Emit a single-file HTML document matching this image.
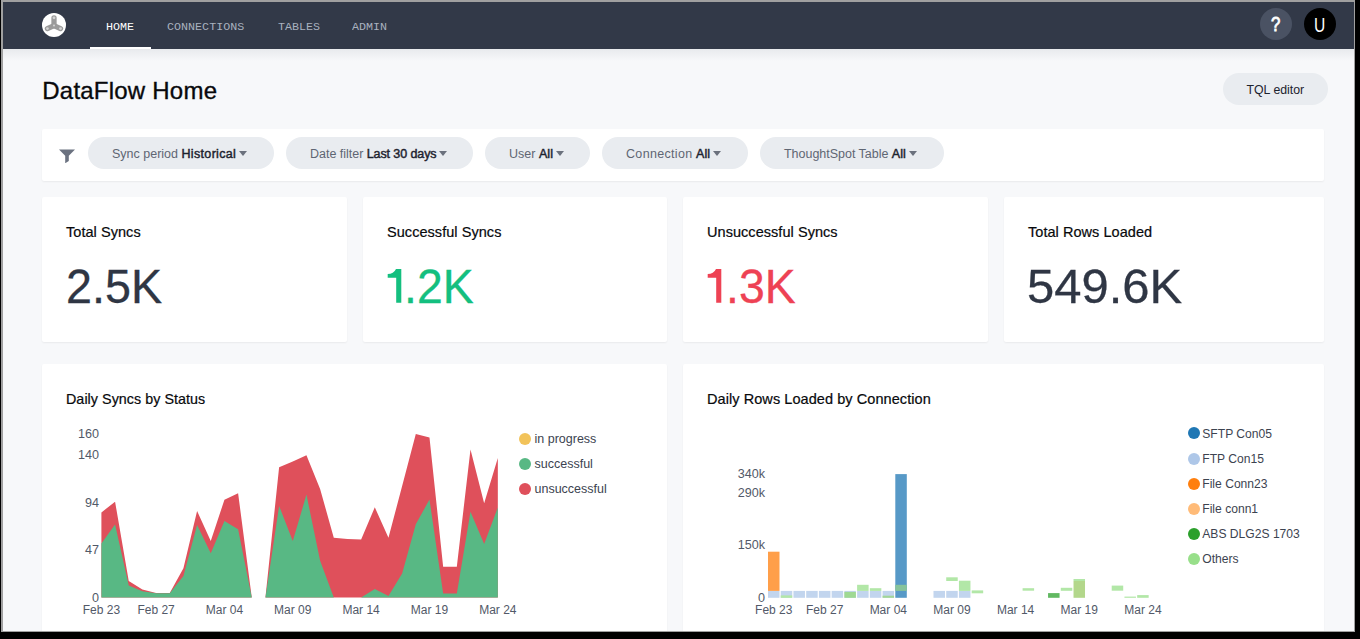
<!DOCTYPE html><html><head><meta charset="utf-8"><style>
html,body{margin:0;padding:0;width:1360px;height:639px;overflow:hidden;background:#000;}
.t{position:absolute;white-space:nowrap;line-height:1;}
.abs{position:absolute;}
#frame{position:absolute;left:1px;top:0;width:1354px;height:632px;background:#a0a0a0;}
#win{position:absolute;left:3px;top:2px;width:1351px;height:629px;background:#f7f8fa;overflow:hidden;}
.card{position:absolute;background:#fff;border-radius:2px;box-shadow:0 1px 2px rgba(0,0,0,0.06);}
.pill{position:absolute;top:137px;height:32px;border-radius:16px;background:#e9ecf0;}
.caret{position:absolute;width:0;height:0;border-left:4px solid transparent;border-right:4px solid transparent;border-top:5px solid #6b717d;}
</style></head><body>
<div id="frame"></div>
<div id="win">

<div class="abs" style="left:-3px;top:-2px;width:1360px;height:639px;">
<div class="abs" style="left:0;top:0;width:1360px;height:48.7px;background:#323948;"></div>
<div class="abs" style="left:0;top:48.7px;width:1360px;height:12px;background:linear-gradient(#e8eaed,#f7f8fa);"></div>
<svg class="abs" style="left:42px;top:13px" width="24" height="24" viewBox="0 0 24 24">
<circle cx="12" cy="12" r="12" fill="#fff"/>
<g stroke="#9b9b9b" stroke-width="5.3" stroke-linecap="round">
<line x1="12" y1="12.6" x2="12" y2="4.8"/><line x1="12" y1="12.6" x2="5.4" y2="15.6"/><line x1="12" y1="12.6" x2="18.5" y2="15.6"/></g>
<g fill="#d4d4d4"><circle cx="12" cy="4.8" r="1.4"/><circle cx="5.4" cy="15.6" r="1.4"/><circle cx="18.5" cy="15.6" r="1.4"/><circle cx="12" cy="12.6" r="1"/></g>
</svg>
<div class="t" style="left:106px;top:20.60px;font-size:12px;color:#ffffff;font-weight:normal;font-family:'Liberation Mono', monospace;transform:scale(0.975,0.97);transform-origin:0 9.2px;">HOME</div>
<div class="abs" style="left:90px;top:46.8px;width:61px;height:2px;background:#fff;"></div>
<div class="t" style="left:167px;top:20.60px;font-size:12px;color:#a9b1bf;font-weight:normal;font-family:'Liberation Mono', monospace;transform:scale(0.975,0.97);transform-origin:0 9.2px;">CONNECTIONS</div>
<div class="t" style="left:278px;top:20.60px;font-size:12px;color:#a9b1bf;font-weight:normal;font-family:'Liberation Mono', monospace;transform:scale(0.975,0.97);transform-origin:0 9.2px;">TABLES</div>
<div class="t" style="left:352px;top:20.60px;font-size:12px;color:#a9b1bf;font-weight:normal;font-family:'Liberation Mono', monospace;transform:scale(0.975,0.97);transform-origin:0 9.2px;">ADMIN</div>
<div class="abs" style="left:1260px;top:8px;width:32px;height:32px;border-radius:50%;background:#4a5263;"></div>
<div class="t" style="left:1270.8px;top:15.19px;font-size:19.5px;color:#fff;font-weight:normal;font-family:'Liberation Sans', sans-serif;-webkit-text-stroke:0.8px #fff;transform:scaleX(0.86);transform-origin:0 0;">?</div>
<div class="abs" style="left:1304px;top:8px;width:32px;height:32px;border-radius:50%;background:#000;"></div>
<div class="t" style="left:1314.3px;top:15.59px;font-size:19.5px;color:#fff;font-weight:normal;font-family:'Liberation Sans', sans-serif;transform:scaleX(0.8);transform-origin:0 0;">U</div>
<div class="t" style="left:42.3px;top:78.68px;font-size:24px;color:#08090c;font-weight:normal;font-family:'Liberation Sans', sans-serif;letter-spacing:0.22px;-webkit-text-stroke:0.35px #08090c;">DataFlow Home</div>
<div class="abs" style="left:1223px;top:73px;width:105px;height:32px;border-radius:16px;background:#e9ecf0;"></div>
<div class="t" style="left:1246.5px;top:83.79px;font-size:12.3px;color:#1d232f;font-weight:normal;font-family:'Liberation Sans', sans-serif;">TQL editor</div>
<div class="card" style="left:42px;top:129px;width:1282px;height:52px;"></div>
<svg class="abs" style="left:59px;top:148.5px" width="16" height="14.5" viewBox="0 0 16 14.5"><path d="M0 0.4H16L9.8 6.8V11.9L6.2 14.3V6.8Z" fill="#6b7280"/></svg>
<div class="pill" style="left:88px;width:186px;"></div>
<div class="t" style="left:112px;top:147.82px;font-size:12.5px;color:#1d232f;font-weight:normal;font-family:'Liberation Sans', sans-serif;"><span style="color:#5f6673;letter-spacing:0px">Sync period</span> <span style="color:#1d232f;-webkit-text-stroke:0.45px #1d232f;letter-spacing:0.33px">Historical</span><span style="display:inline-block;width:0;height:0;border-left:4px solid transparent;border-right:4px solid transparent;border-top:5px solid #6b717d;margin-left:3px;vertical-align:2px"></span></div>
<div class="pill" style="left:286px;width:187px;"></div>
<div class="t" style="left:310px;top:147.82px;font-size:12.5px;color:#1d232f;font-weight:normal;font-family:'Liberation Sans', sans-serif;"><span style="color:#5f6673;letter-spacing:-0.02px">Date filter</span> <span style="color:#1d232f;-webkit-text-stroke:0.45px #1d232f;letter-spacing:-0.1px">Last 30 days</span><span style="display:inline-block;width:0;height:0;border-left:4px solid transparent;border-right:4px solid transparent;border-top:5px solid #6b717d;margin-left:3px;vertical-align:2px"></span></div>
<div class="pill" style="left:485px;width:105px;"></div>
<div class="t" style="left:509px;top:147.82px;font-size:12.5px;color:#1d232f;font-weight:normal;font-family:'Liberation Sans', sans-serif;"><span style="color:#5f6673;letter-spacing:0px">User</span> <span style="color:#1d232f;-webkit-text-stroke:0.45px #1d232f;letter-spacing:0.1px">All</span><span style="display:inline-block;width:0;height:0;border-left:4px solid transparent;border-right:4px solid transparent;border-top:5px solid #6b717d;margin-left:3px;vertical-align:2px"></span></div>
<div class="pill" style="left:602px;width:146px;"></div>
<div class="t" style="left:626px;top:147.82px;font-size:12.5px;color:#1d232f;font-weight:normal;font-family:'Liberation Sans', sans-serif;"><span style="color:#5f6673;letter-spacing:0.33px">Connection</span> <span style="color:#1d232f;-webkit-text-stroke:0.45px #1d232f;letter-spacing:0.1px">All</span><span style="display:inline-block;width:0;height:0;border-left:4px solid transparent;border-right:4px solid transparent;border-top:5px solid #6b717d;margin-left:3px;vertical-align:2px"></span></div>
<div class="pill" style="left:760px;width:184px;"></div>
<div class="t" style="left:784px;top:147.82px;font-size:12.5px;color:#1d232f;font-weight:normal;font-family:'Liberation Sans', sans-serif;"><span style="color:#5f6673;letter-spacing:-0.02px">ThoughtSpot Table</span> <span style="color:#1d232f;-webkit-text-stroke:0.45px #1d232f;letter-spacing:0.05px">All</span><span style="display:inline-block;width:0;height:0;border-left:4px solid transparent;border-right:4px solid transparent;border-top:5px solid #6b717d;margin-left:3px;vertical-align:2px"></span></div>
<div class="card" style="left:42px;top:197px;width:305px;height:145px;"></div>
<div class="t" style="left:66px;top:224.63px;font-size:14.5px;color:#08090c;font-weight:normal;font-family:'Liberation Sans', sans-serif;-webkit-text-stroke:0.2px #08090c;letter-spacing:0.05px;">Total Syncs</div>
<div class="t" style="left:66.3px;top:262.77px;font-size:48px;color:#2f3644;font-weight:normal;font-family:'Liberation Sans', sans-serif;transform:scaleX(0.973);transform-origin:0 0;-webkit-text-stroke:0.3px #2f3644;">2.5K</div>
<div class="card" style="left:363px;top:197px;width:304px;height:145px;"></div>
<div class="t" style="left:387px;top:224.63px;font-size:14.5px;color:#08090c;font-weight:normal;font-family:'Liberation Sans', sans-serif;-webkit-text-stroke:0.2px #08090c;letter-spacing:0.05px;">Successful Syncs</div>
<svg class="abs" style="left:0;top:0" width="1360" height="639"><path transform="translate(0,0)" d="M401.3 268.9V302.8H396.2V277.7H387.7V273.9Q393.6 273.9 396.0 268.9Z" fill="#14bf7f"/></svg>
<div class="t" style="left:404.3px;top:262.77px;font-size:48px;color:#14bf7f;font-weight:normal;font-family:'Liberation Sans', sans-serif;transform:scaleX(0.967);transform-origin:0 0;-webkit-text-stroke:0.3px #14bf7f;">.2K</div>
<div class="card" style="left:683px;top:197px;width:305px;height:145px;"></div>
<div class="t" style="left:707px;top:224.63px;font-size:14.5px;color:#08090c;font-weight:normal;font-family:'Liberation Sans', sans-serif;-webkit-text-stroke:0.2px #08090c;letter-spacing:0.05px;">Unsuccessful Syncs</div>
<svg class="abs" style="left:0;top:0" width="1360" height="639"><path transform="translate(320,0)" d="M401.3 268.9V302.8H396.2V277.7H387.7V273.9Q393.6 273.9 396.0 268.9Z" fill="#ee4254"/></svg>
<div class="t" style="left:725.7px;top:262.77px;font-size:48px;color:#ee4254;font-weight:normal;font-family:'Liberation Sans', sans-serif;transform:scaleX(0.967);transform-origin:0 0;-webkit-text-stroke:0.3px #ee4254;">.3K</div>
<div class="card" style="left:1004px;top:197px;width:320px;height:145px;"></div>
<div class="t" style="left:1028px;top:224.63px;font-size:14.5px;color:#08090c;font-weight:normal;font-family:'Liberation Sans', sans-serif;-webkit-text-stroke:0.2px #08090c;letter-spacing:0.05px;">Total Rows Loaded</div>
<div class="t" style="left:1027.0px;top:262.77px;font-size:48px;color:#2f3644;font-weight:normal;font-family:'Liberation Sans', sans-serif;transform:scaleX(1.02);transform-origin:0 0;-webkit-text-stroke:0.3px #2f3644;">549.6K</div>
<div class="card" style="left:42px;top:364px;width:625px;height:300px;"></div>
<div class="card" style="left:683px;top:364px;width:641px;height:300px;"></div>
<div class="t" style="left:66px;top:391.70px;font-size:14.3px;color:#08090c;font-weight:normal;font-family:'Liberation Sans', sans-serif;-webkit-text-stroke:0.2px #08090c;letter-spacing:0.05px;">Daily Syncs by Status</div>
<div class="t" style="left:707px;top:391.53px;font-size:14.5px;color:#08090c;font-weight:normal;font-family:'Liberation Sans', sans-serif;-webkit-text-stroke:0.2px #08090c;letter-spacing:0.07px;">Daily Rows Loaded by Connection</div>
<svg class="abs" style="left:0;top:0" width="1360" height="639" viewBox="0 0 1360 639">
<polygon points="101.40,597.6 101.40,512.4 115.07,501.7 128.74,580.9 142.41,589.5 156.08,592.9 169.75,592.9 183.42,568.3 197.09,511 210.76,541.1 224.43,499.7 238.10,493.2 251.77,597.5 265.44,597.5 279.11,467.3 292.78,461.4 306.45,455.2 320.12,489 333.79,537.7 347.46,538.9 361.13,539.4 374.80,507.3 388.47,537.7 402.14,486 415.81,434.1 429.48,437.5 443.15,566.7 456.82,566.7 470.49,449.6 484.16,503.2 497.83,458.1 497.83,597.6" fill="#df505b"/>
<polygon points="101.40,597.6 101.40,543.4 115.07,524.4 128.74,585.5 142.41,591.2 156.08,593.3 169.75,593.3 183.42,576 197.09,525.1 210.76,553.3 224.43,521 238.10,529.2 251.77,597.5 265.44,597.5 279.11,505.9 292.78,541.1 306.45,494.6 320.12,560.8 333.79,597.5 347.46,597.5 361.13,597.5 374.80,589 388.47,596 402.14,573.5 415.81,524.3 429.48,499.5 443.15,593.5 456.82,593.5 470.49,511.7 484.16,544.1 497.83,507.4 497.83,597.6" fill="#58b884"/>
<rect x="768.00" y="590.9" width="11.5" height="6.90" fill="#c2d5ee"/>
<rect x="768.00" y="551.7" width="11.5" height="39.20" fill="#ff9f4a"/>
<rect x="780.73" y="590.9" width="11.5" height="6.90" fill="#c2d5ee"/>
<rect x="780.73" y="595.4" width="11.5" height="2.40" fill="#b2e7a7"/>
<rect x="793.46" y="590.9" width="11.5" height="6.90" fill="#c2d5ee"/>
<rect x="806.19" y="590.9" width="11.5" height="6.90" fill="#c2d5ee"/>
<rect x="818.92" y="590.9" width="11.5" height="6.90" fill="#c2d5ee"/>
<rect x="831.65" y="590.9" width="11.5" height="6.90" fill="#c2d5ee"/>
<rect x="844.38" y="590.9" width="11.5" height="6.90" fill="#c2d5ee"/>
<rect x="844.38" y="591.9" width="11.5" height="5.90" fill="#9fd993"/>
<rect x="857.11" y="590.9" width="11.5" height="6.90" fill="#c2d5ee"/>
<rect x="857.11" y="584.8" width="11.5" height="6.10" fill="#b2e7a7"/>
<rect x="869.84" y="590.9" width="11.5" height="6.90" fill="#c2d5ee"/>
<rect x="869.84" y="588.2" width="11.5" height="2.70" fill="#b2e7a7"/>
<rect x="882.57" y="590.9" width="11.5" height="6.90" fill="#c2d5ee"/>
<rect x="882.57" y="595.7" width="11.5" height="2.10" fill="#a3d697"/>
<rect x="895.30" y="474.1" width="11.5" height="123.70" fill="#5799c7"/>
<rect x="895.30" y="584.8" width="11.5" height="6.10" fill="#87c39b"/>
<rect x="933.49" y="590.9" width="11.5" height="6.90" fill="#c2d5ee"/>
<rect x="946.22" y="590.9" width="11.5" height="6.90" fill="#c2d5ee"/>
<rect x="946.22" y="577.3" width="11.5" height="3.70" fill="#b2e7a7"/>
<rect x="958.95" y="590.9" width="11.5" height="6.90" fill="#c2d5ee"/>
<rect x="958.95" y="580.7" width="11.5" height="10.20" fill="#b2e7a7"/>
<rect x="971.68" y="590.4" width="11.5" height="2.90" fill="#b2e7a7"/>
<rect x="1022.60" y="588.2" width="11.5" height="2.50" fill="#b2e7a7"/>
<rect x="1048.06" y="593.1" width="11.5" height="4.70" fill="#61b861"/>
<rect x="1060.79" y="587.8" width="11.5" height="3.00" fill="#b2e7a7"/>
<rect x="1073.52" y="581" width="11.5" height="16.80" fill="#b3d78b"/>
<rect x="1073.52" y="579" width="11.5" height="2.00" fill="#b2e7a7"/>
<rect x="1111.71" y="585.6" width="11.5" height="5.10" fill="#b2e7a7"/>
<rect x="1124.44" y="596.6" width="11.5" height="1.20" fill="#b2e7a7"/>
<rect x="1137.17" y="595.1" width="11.5" height="2.70" fill="#b2e7a7"/>
</svg>
<div class="t" style="left:-101.5px;width:200px;text-align:right;top:427.72px;font-size:12px;color:#525968;font-family:'Liberation Sans', sans-serif;transform:scaleX(1.05);transform-origin:100% 0;">160</div>
<div class="t" style="left:-101.5px;width:200px;text-align:right;top:448.62px;font-size:12px;color:#525968;font-family:'Liberation Sans', sans-serif;transform:scaleX(1.05);transform-origin:100% 0;">140</div>
<div class="t" style="left:-101.5px;width:200px;text-align:right;top:497.12px;font-size:12px;color:#525968;font-family:'Liberation Sans', sans-serif;transform:scaleX(1.05);transform-origin:100% 0;">94</div>
<div class="t" style="left:-101.5px;width:200px;text-align:right;top:544.12px;font-size:12px;color:#525968;font-family:'Liberation Sans', sans-serif;transform:scaleX(1.05);transform-origin:100% 0;">47</div>
<div class="t" style="left:-101.5px;width:200px;text-align:right;top:591.72px;font-size:12px;color:#525968;font-family:'Liberation Sans', sans-serif;transform:scaleX(1.05);transform-origin:100% 0;">0</div>
<div class="t" style="left:1.4000000000000057px;width:200px;text-align:center;top:603.54px;font-size:12px;color:#525968;font-family:'Liberation Sans', sans-serif">Feb 23</div>
<div class="t" style="left:56.08000000000001px;width:200px;text-align:center;top:603.54px;font-size:12px;color:#525968;font-family:'Liberation Sans', sans-serif">Feb 27</div>
<div class="t" style="left:124.43px;width:200px;text-align:center;top:603.54px;font-size:12px;color:#525968;font-family:'Liberation Sans', sans-serif">Mar 04</div>
<div class="t" style="left:192.77999999999997px;width:200px;text-align:center;top:603.54px;font-size:12px;color:#525968;font-family:'Liberation Sans', sans-serif">Mar 09</div>
<div class="t" style="left:261.13px;width:200px;text-align:center;top:603.54px;font-size:12px;color:#525968;font-family:'Liberation Sans', sans-serif">Mar 14</div>
<div class="t" style="left:329.48px;width:200px;text-align:center;top:603.54px;font-size:12px;color:#525968;font-family:'Liberation Sans', sans-serif">Mar 19</div>
<div class="t" style="left:397.83000000000004px;width:200px;text-align:center;top:603.54px;font-size:12px;color:#525968;font-family:'Liberation Sans', sans-serif">Mar 24</div>
<div class="t" style="left:564.5px;width:200px;text-align:right;top:467.92px;font-size:12px;color:#525968;font-family:'Liberation Sans', sans-serif;transform:scaleX(1.05);transform-origin:100% 0;">340k</div>
<div class="t" style="left:564.5px;width:200px;text-align:right;top:486.82px;font-size:12px;color:#525968;font-family:'Liberation Sans', sans-serif;transform:scaleX(1.05);transform-origin:100% 0;">290k</div>
<div class="t" style="left:564.5px;width:200px;text-align:right;top:539.02px;font-size:12px;color:#525968;font-family:'Liberation Sans', sans-serif;transform:scaleX(1.05);transform-origin:100% 0;">150k</div>
<div class="t" style="left:564.5px;width:200px;text-align:right;top:591.92px;font-size:12px;color:#525968;font-family:'Liberation Sans', sans-serif;transform:scaleX(1.05);transform-origin:100% 0;">0</div>
<div class="t" style="left:673.75px;width:200px;text-align:center;top:603.54px;font-size:12px;color:#525968;font-family:'Liberation Sans', sans-serif">Feb 23</div>
<div class="t" style="left:724.67px;width:200px;text-align:center;top:603.54px;font-size:12px;color:#525968;font-family:'Liberation Sans', sans-serif">Feb 27</div>
<div class="t" style="left:788.32px;width:200px;text-align:center;top:603.54px;font-size:12px;color:#525968;font-family:'Liberation Sans', sans-serif">Mar 04</div>
<div class="t" style="left:851.97px;width:200px;text-align:center;top:603.54px;font-size:12px;color:#525968;font-family:'Liberation Sans', sans-serif">Mar 09</div>
<div class="t" style="left:915.62px;width:200px;text-align:center;top:603.54px;font-size:12px;color:#525968;font-family:'Liberation Sans', sans-serif">Mar 14</div>
<div class="t" style="left:979.27px;width:200px;text-align:center;top:603.54px;font-size:12px;color:#525968;font-family:'Liberation Sans', sans-serif">Mar 19</div>
<div class="t" style="left:1042.92px;width:200px;text-align:center;top:603.54px;font-size:12px;color:#525968;font-family:'Liberation Sans', sans-serif">Mar 24</div>
<div class="abs" style="left:519.1px;top:432.9px;width:12px;height:12px;border-radius:50%;background:#f2c35a"></div><div class="t" style="left:534.5px;top:433.02px;font-size:12.5px;color:#3c4350;font-weight:normal;font-family:'Liberation Sans', sans-serif;">in progress</div>
<div class="abs" style="left:519.1px;top:457.9px;width:12px;height:12px;border-radius:50%;background:#58b884"></div><div class="t" style="left:534.5px;top:458.02px;font-size:12.5px;color:#3c4350;font-weight:normal;font-family:'Liberation Sans', sans-serif;">successful</div>
<div class="abs" style="left:519.1px;top:482.9px;width:12px;height:12px;border-radius:50%;background:#df505b"></div><div class="t" style="left:534.5px;top:483.02px;font-size:12.5px;color:#3c4350;font-weight:normal;font-family:'Liberation Sans', sans-serif;">unsuccessful</div>
<div class="abs" style="left:1187.6px;top:427.4px;width:12px;height:12px;border-radius:50%;background:#1f77b4"></div><div class="t" style="left:1202.3px;top:427.86px;font-size:12.1px;color:#3c4350;font-weight:normal;font-family:'Liberation Sans', sans-serif;">SFTP Con05</div>
<div class="abs" style="left:1187.6px;top:452.5px;width:12px;height:12px;border-radius:50%;background:#aec7e8"></div><div class="t" style="left:1202.3px;top:452.96px;font-size:12.1px;color:#3c4350;font-weight:normal;font-family:'Liberation Sans', sans-serif;">FTP Con15</div>
<div class="abs" style="left:1187.6px;top:477.59999999999997px;width:12px;height:12px;border-radius:50%;background:#ff7f0e"></div><div class="t" style="left:1202.3px;top:478.06px;font-size:12.1px;color:#3c4350;font-weight:normal;font-family:'Liberation Sans', sans-serif;">File Conn23</div>
<div class="abs" style="left:1187.6px;top:502.7px;width:12px;height:12px;border-radius:50%;background:#ffbb78"></div><div class="t" style="left:1202.3px;top:503.16px;font-size:12.1px;color:#3c4350;font-weight:normal;font-family:'Liberation Sans', sans-serif;">File conn1</div>
<div class="abs" style="left:1187.6px;top:527.8px;width:12px;height:12px;border-radius:50%;background:#2ca02c"></div><div class="t" style="width:97.5px;overflow:hidden;left:1202.3px;top:528.26px;font-size:12.1px;color:#3c4350;font-weight:normal;font-family:'Liberation Sans', sans-serif;">ABS DLG2S 17032</div>
<div class="abs" style="left:1187.6px;top:552.9px;width:12px;height:12px;border-radius:50%;background:#98df8a"></div><div class="t" style="left:1202.3px;top:553.36px;font-size:12.1px;color:#3c4350;font-weight:normal;font-family:'Liberation Sans', sans-serif;">Others</div>
</div></div></body></html>
